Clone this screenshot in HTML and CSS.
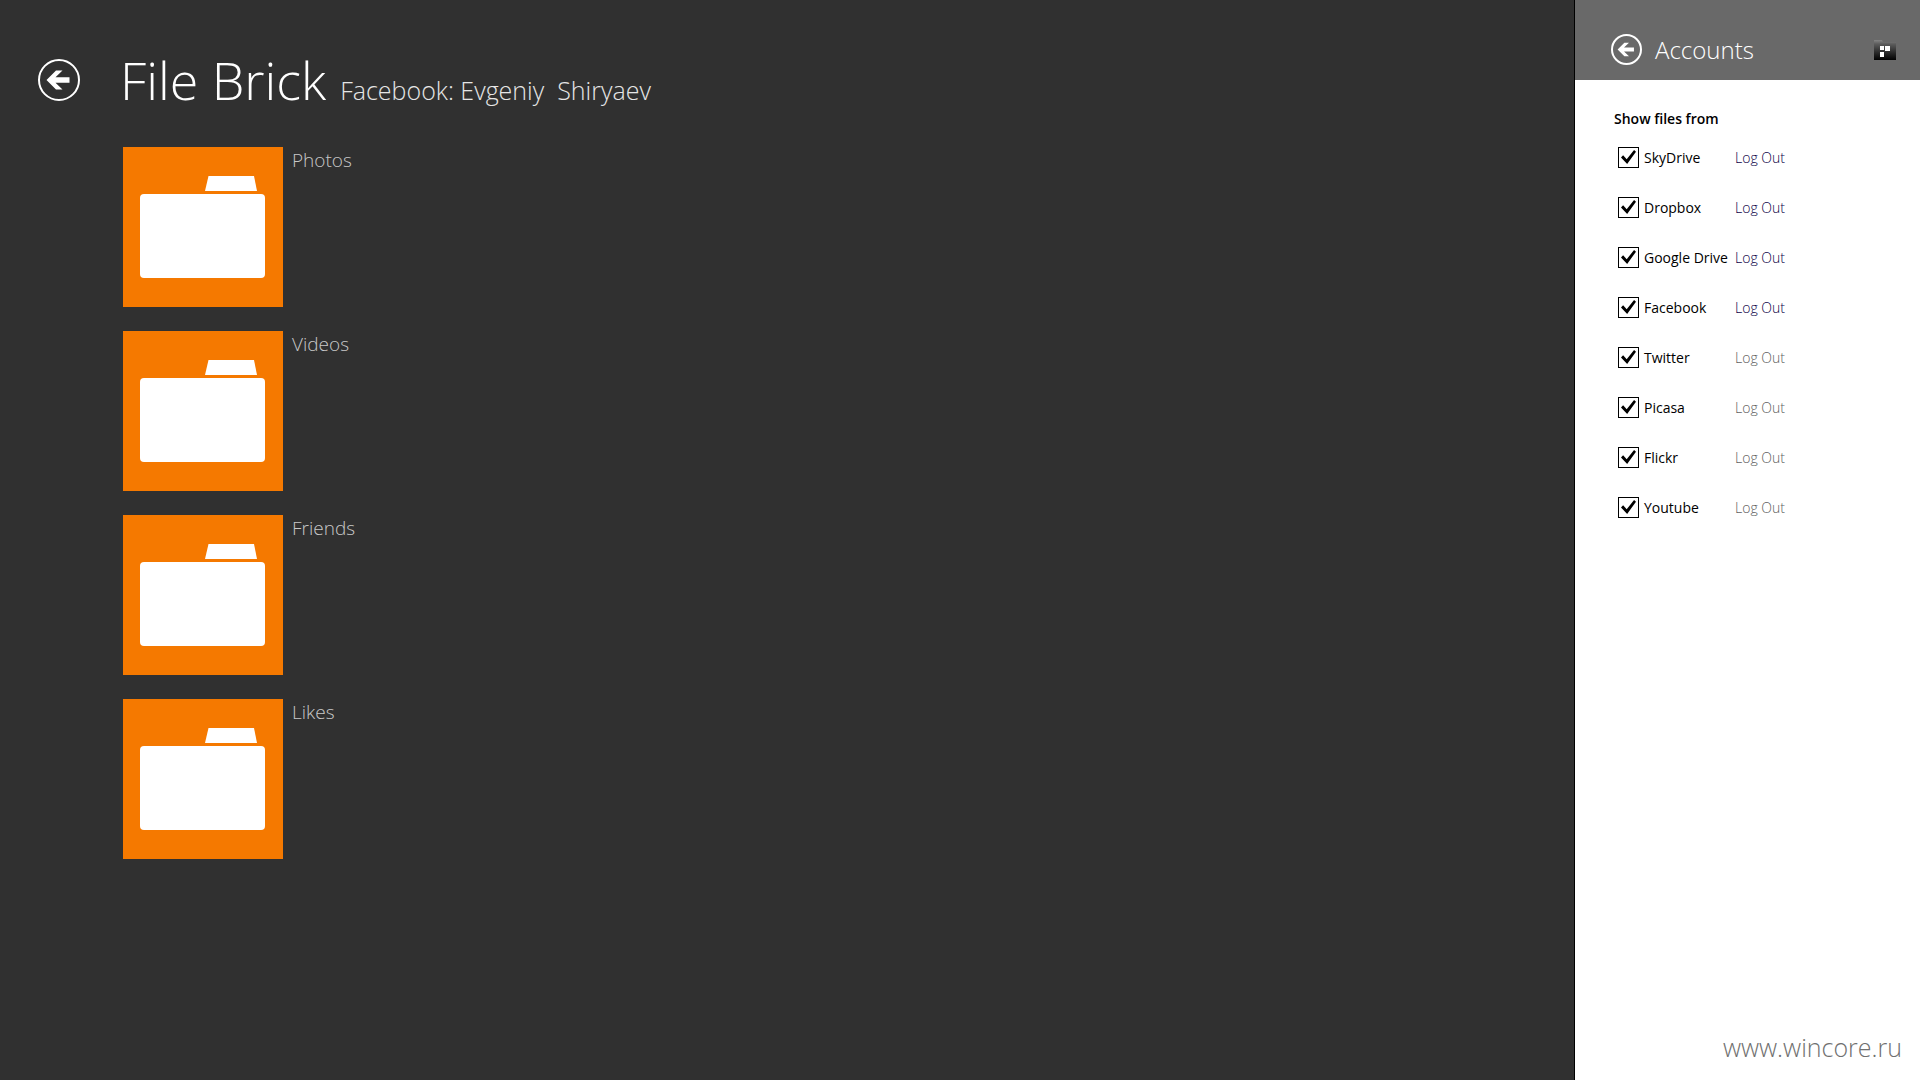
FILE: index.html
```html
<!DOCTYPE html>
<html lang="en">
<head>
    <meta charset="UTF-8">
    <meta name="viewport" content="width=device-width, initial-scale=1.0">
    <title>File Brick</title>
    <link rel="stylesheet" href="styles.css">
</head>
<body>
    <!-- shared shapes -->
    <svg class="defs" aria-hidden="true">
        <symbol id="arrow" viewBox="0 0 38 38">
            <path d="M6.5 19 L16 9.5 H22.5 L15.5 16.3 H29.5 V21.7 H15.5 L22.5 28.5 H16 Z"/>
        </symbol>
        <symbol id="folder" viewBox="0 0 160 160">
            <path d="M85.5 29 H131 L134 44 H82 Z"/>
            <rect x="17" y="47" width="125" height="84" rx="4"/>
        </symbol>
    </svg>

    <main class="browser">
        <header class="page-header">
            <button class="back" aria-label="Back"><svg><use href="#arrow"/></svg></button>
            <h1>File Brick</h1>
            <h2>Facebook: Evgeniy&nbsp; Shiryaev</h2>
        </header>

        <ul class="folders">
            <li><a href="#photos"><svg class="tile"><use href="#folder"/></svg><span>Photos</span></a></li>
            <li><a href="#videos"><svg class="tile"><use href="#folder"/></svg><span>Videos</span></a></li>
            <li><a href="#friends"><svg class="tile"><use href="#folder"/></svg><span>Friends</span></a></li>
            <li><a href="#likes"><svg class="tile"><use href="#folder"/></svg><span>Likes</span></a></li>
        </ul>
    </main>

    <aside class="flyout">
        <header class="flyout-header">
            <button class="back small" aria-label="Back"><svg><use href="#arrow"/></svg></button>
            <h3>Accounts</h3>
            <svg class="app-icon" viewBox="0 0 22 20">
                <defs>
                    <linearGradient id="shade" x1="0" y1="0" x2="0" y2="1">
                        <stop offset="0" stop-color="#858585"/>
                        <stop offset="0.2" stop-color="#5c5c5c"/>
                        <stop offset="0.5" stop-color="#383838"/>
                        <stop offset="1" stop-color="#000"/>
                    </linearGradient>
                </defs>
                <path fill="url(#shade)" d="M0 0 H8 L9 2 H22 V20 H0 Z"/>
                <path fill="#fff" d="M6 6 H10 V10 H6 Z M11 6 H16 V11 H11 Z M6 12 H10 V17 H6 Z"/>
            </svg>
        </header>

        <section class="accounts">
            <h4>Show files from</h4>
            <ul>
                <li><label><input type="checkbox" checked>SkyDrive</label><button class="logout">Log Out</button></li>
                <li><label><input type="checkbox" checked>Dropbox</label><button class="logout">Log Out</button></li>
                <li><label><input type="checkbox" checked>Google Drive</label><button class="logout">Log Out</button></li>
                <li><label><input type="checkbox" checked>Facebook</label><button class="logout">Log Out</button></li>
                <li><label><input type="checkbox" checked>Twitter</label><button class="logout" disabled>Log Out</button></li>
                <li><label><input type="checkbox" checked>Picasa</label><button class="logout" disabled>Log Out</button></li>
                <li><label><input type="checkbox" checked>Flickr</label><button class="logout" disabled>Log Out</button></li>
                <li><label><input type="checkbox" checked>Youtube</label><button class="logout" disabled>Log Out</button></li>
            </ul>
        </section>

        <a class="site" href="#site">www.wincore.ru</a>
    </aside>
</body>
</html>
```

FILE: styles.css
```css
* {
    box-sizing: border-box;
}

body {
    margin: 0;
    min-height: 100vh;
    display: flex;
    background-color: #303030;
    color: #ffffff;
    font-family: "Segoe UI", "Open Sans", sans-serif;
}

h1, h2, h3, h4, ul {
    margin: 0;
    padding: 0;
}

h1, h2, h3 {
    font-weight: 300;
}

ul {
    list-style: none;
}

a {
    color: inherit;
    text-decoration: none;
}

button {
    padding: 0;
    border: none;
    background: none;
    color: inherit;
    font-family: inherit;
    cursor: pointer;
}

.defs {
    position: absolute;
    width: 0;
    height: 0;
}

/* main area */
.browser {
    flex: 1;
    padding: 40px 38px;
}

.page-header {
    display: flex;
    align-items: baseline;
    height: 107px;
}

.page-header h1 {
    margin-left: 40px;
    font-size: 52px;
    line-height: 80px;
}

.page-header h2 {
    margin-left: 14px;
    font-size: 25px;
    color: #e6e6e6;
}

.back {
    flex: none;
    align-self: flex-start;
    width: 42px;
    height: 42px;
    margin-top: 19px;
    border: 2px solid #ffffff;
    border-radius: 50%;
}

.back svg {
    display: block;
    width: 100%;
    height: 100%;
    fill: #ffffff;
}

.folders {
    display: flex;
    flex-direction: column;
    gap: 24px;
    padding-left: 85px;
}

.folders a {
    display: flex;
    gap: 9px;
    font-size: 19px;
    line-height: 26px;
    font-weight: 300;
    color: #c8c8c8;
}

.tile {
    width: 160px;
    height: 160px;
    background-color: #f57900;
    fill: #ffffff;
}

/* accounts flyout */
.flyout {
    display: flex;
    flex-direction: column;
    width: 346px;
    border-left: 1px solid #000000;
    background-color: #ffffff;
    color: #000000;
}

.flyout-header {
    display: flex;
    align-items: center;
    height: 80px;
    padding: 19px 24px 0 36px;
    background-color: #696969;
    color: #ffffff;
}

.back.small {
    align-self: center;
    width: 31px;
    height: 31px;
    margin: 0;
}

.flyout-header h3 {
    flex: 1;
    margin-left: 13px;
    font-size: 24px;
}

.app-icon {
    width: 22px;
    height: 20px;
}

.accounts {
    flex: 1;
    padding: 28px 39px;
}

.accounts h4 {
    font-size: 14px;
    line-height: 22px;
    font-weight: 600;
}

.accounts ul {
    margin-top: 2px;
}

.accounts li {
    display: flex;
    align-items: center;
    height: 50px;
    padding-left: 4px;
    font-size: 14px;
}

.accounts label {
    display: flex;
    align-items: center;
    gap: 5px;
    width: 117px;
    white-space: nowrap;
}

.accounts input {
    appearance: none;
    display: grid;
    place-items: center;
    width: 21px;
    height: 21px;
    margin: 0;
    border: 1px solid #000000;
    background-color: #ffffff;
}

.accounts input:checked::before {
    content: "";
    width: 15px;
    height: 14px;
    background-color: #000000;
    clip-path: polygon(0 53%, 14% 38%, 38% 66%, 87% 0, 100% 12%, 41% 100%);
}

.logout {
    font-size: 14px;
    font-weight: 300;
    color: #0c0046;
}

.logout:disabled {
    color: #606060;
}

.site {
    align-self: flex-end;
    padding: 0 18px 16px 0;
    font-size: 25px;
    font-weight: 300;
    color: #707070;
}
```
